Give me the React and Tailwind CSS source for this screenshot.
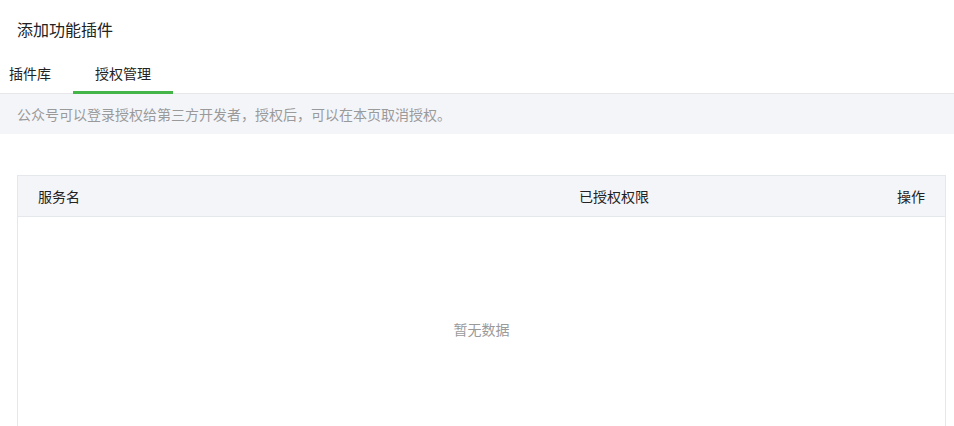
const font = { fontFamily: '"Noto Sans CJK SC", "Liberation Sans", sans-serif' };

function Tabs() {
  return (
    <div className="flex h-[36px] border-b border-[#e7e7eb]">
      <div className="flex items-center pl-[9px] w-[73px] pb-[4px] text-[14px] text-[#222]">插件库</div>
      <div className="flex items-center justify-center w-[100px] h-[36px] pb-[2px] border-b-[3px] border-[#44b549] text-[14px] text-[#222]">
        授权管理
      </div>
    </div>
  );
}

export default function App() {
  return (
    <div className="w-[954px] h-[426px] overflow-hidden bg-white" style={font}>
      <div className="flex items-center h-[58px] px-[17px] text-[16px] text-[#222]">添加功能插件</div>
      <Tabs />
      <div className="flex items-center h-[40px] px-[17px] bg-[#f4f5f9] text-[14px] text-[#9a9a9a]">
        公众号可以登录授权给第三方开发者，授权后，可以在本页取消授权。
      </div>
      <div className="mt-[41px] ml-[17px] mr-[8px] border border-[#e4e8eb]">
        <div className="grid grid-cols-[541px_1fr_auto] items-center h-[41px] px-[20px] bg-[#f4f5f9] border-b border-[#e4e8eb] text-[14px] text-[#222]">
          <span>服务名</span>
          <span>已授权权限</span>
          <span>操作</span>
        </div>
        <div className="flex items-center justify-center h-[224px] text-[14px] text-[#9a9a9a]">暂无数据</div>
      </div>
    </div>
  );
}
